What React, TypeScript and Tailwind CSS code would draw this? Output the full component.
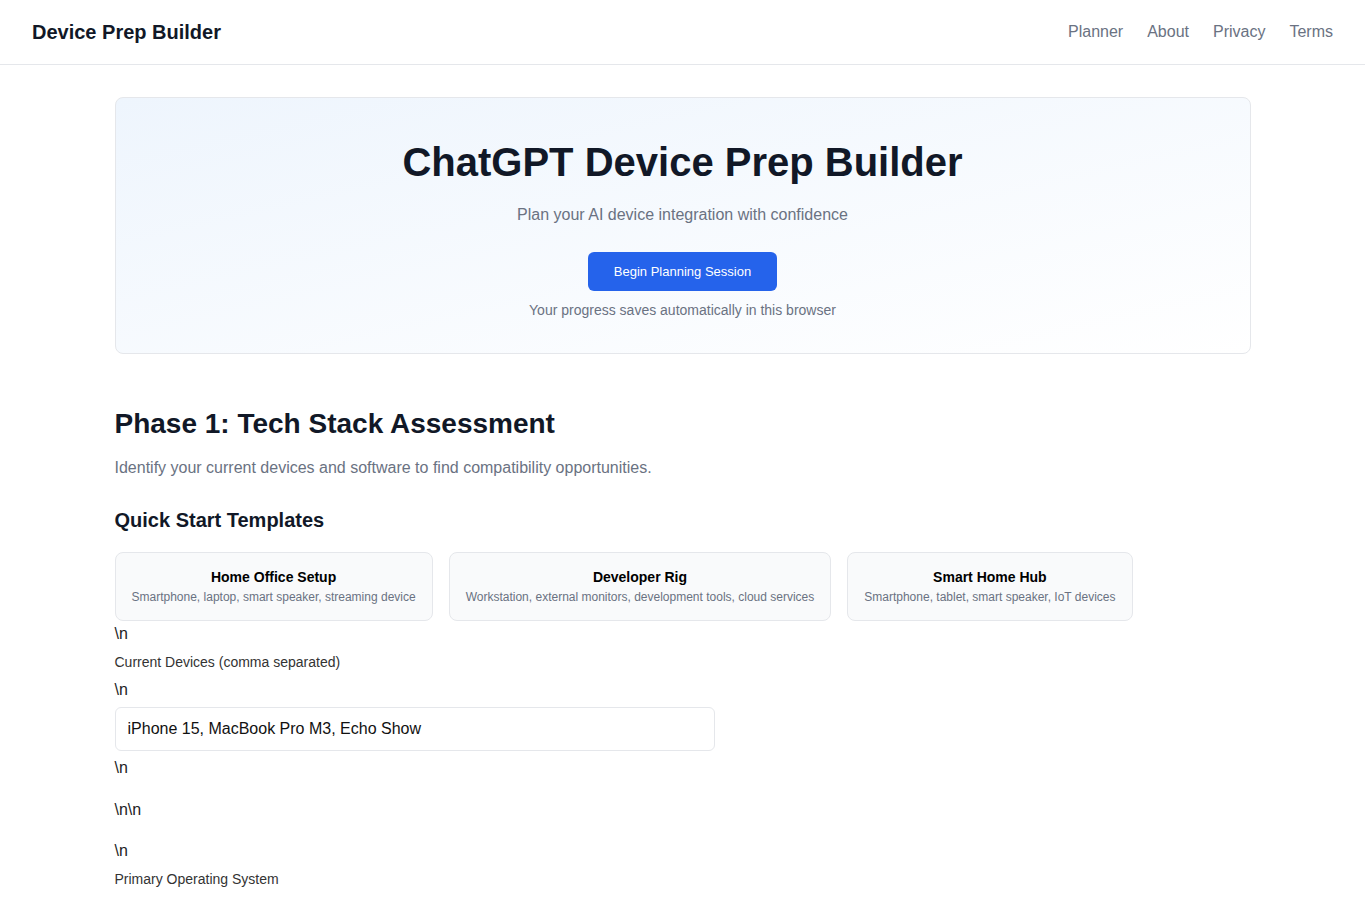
import React, { useState } from 'react'

// Plantillas de inicio rápido
const templates = [
  { title: 'Home Office Setup', devices: 'Smartphone, laptop, smart speaker, streaming device' },
  { title: 'Developer Rig', devices: 'Workstation, external monitors, development tools, cloud services' },
  { title: 'Smart Home Hub', devices: 'Smartphone, tablet, smart speaker, IoT devices' },
]

const navLinks = ['Planner', 'About', 'Privacy', 'Terms']

export default function App() {
  const [devices, setDevices] = useState('iPhone 15, MacBook Pro M3, Echo Show')

  return (
    <div className="min-h-screen bg-white text-gray-900 font-['Liberation_Sans',Arial,sans-serif]">
      {/* Cabecera */}
      <header className="h-[65px] border-b border-gray-200 px-8 flex items-center justify-between">
        <span className="text-xl font-bold text-[#111827]">Device Prep Builder</span>
        <nav className="flex gap-6 text-base text-gray-500">
          {navLinks.map((link) => (
            <a key={link} href="#" className="hover:text-gray-700">
              {link}
            </a>
          ))}
        </nav>
      </header>

      <main className="max-w-6xl mx-auto px-2 pt-8">
        {/* Hero */}
        <section className="h-[257px] rounded-lg border border-gray-200 bg-linear-to-br from-[#eef5fd] to-white flex flex-col items-center pt-[40px]">
          <h1 className="text-[40px] leading-[48px] font-bold text-[#111827]">ChatGPT Device Prep Builder</h1>
          <p className="mt-[17px] text-base leading-6 text-gray-500">Plan your AI device integration with confidence</p>
          <button className="mt-[25px] h-[39px] px-[26px] rounded-md bg-[#2563eb] text-white text-[13px] hover:bg-[#1d4ed8]">
            Begin Planning Session
          </button>
          <p className="mt-[9px] text-sm leading-5 text-gray-500">Your progress saves automatically in this browser</p>
        </section>

        {/* Fase 1 */}
        <section className="mt-[54px]">
          <h2 className="text-[28px] leading-[32px] font-bold text-[#111827]">Phase 1: Tech Stack Assessment</h2>
          <p className="mt-[16px] text-base leading-6 text-gray-500">
            Identify your current devices and software to find compatibility opportunities.
          </p>

          <h3 className="mt-[26px] text-xl leading-7 font-bold text-[#111827]">Quick Start Templates</h3>
          <div className="mt-[18px] flex gap-4">
            {templates.map((t) => (
              <button
                key={t.title}
                onClick={() => setDevices(t.devices)}
                className="h-[69px] px-4 pb-[2px] rounded-lg border border-gray-200 bg-[#f9fafb] flex flex-col items-center justify-center"
              >
                <span className="text-sm leading-5 font-bold text-black">{t.title}</span>
                <span className="mt-[2px] text-xs leading-4 text-gray-500">{t.devices}</span>
              </button>
            ))}
          </div>

          <div className="mt-[1px] text-base leading-6 text-[#222]">{'\\n'}</div>
          <label htmlFor="devices" className="block mt-[6px] text-sm leading-5 text-[#333]">
            Current Devices (comma separated)
          </label>
          <div className="mt-[6px] text-base leading-6 text-[#222]">{'\\n'}</div>
          <input
            id="devices"
            value={devices}
            onChange={(e) => setDevices(e.target.value)}
            className="mt-[5px] block w-[600px] h-[44px] px-3 rounded-md border border-gray-200 text-base text-[#111] outline-none"
          />
          <div className="mt-[5px] text-base leading-6 text-[#222]">{'\\n'}</div>
          <div className="mt-[18px] text-base leading-6 text-[#222]">{'\\n\\n'}</div>
          <div className="mt-[17px] text-base leading-6 text-[#222]">{'\\n'}</div>
          <label className="block mt-[6px] text-sm leading-5 text-[#333]">Primary Operating System</label>
        </section>
      </main>
    </div>
  )
}
